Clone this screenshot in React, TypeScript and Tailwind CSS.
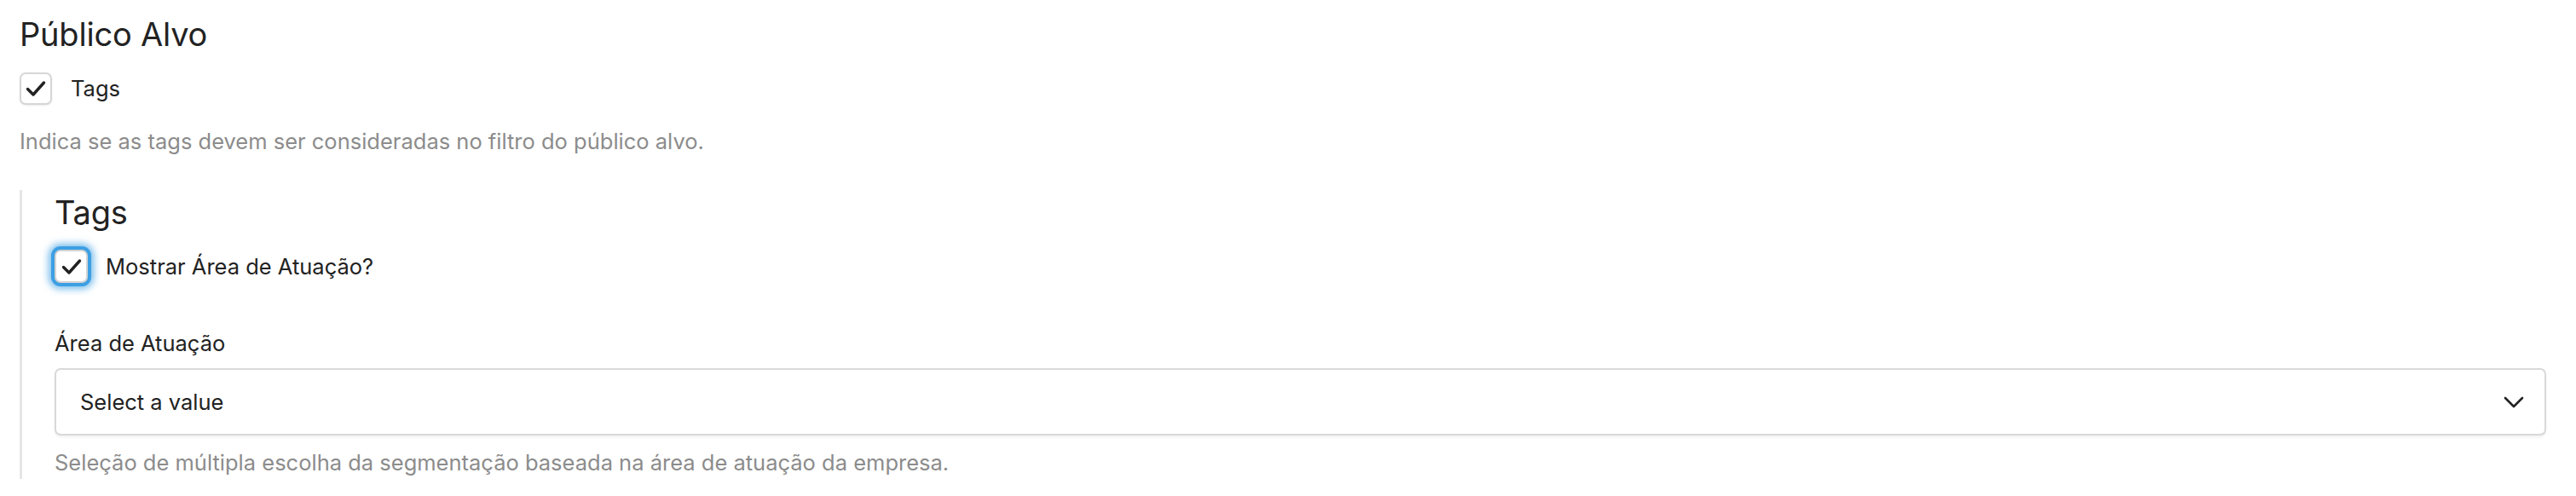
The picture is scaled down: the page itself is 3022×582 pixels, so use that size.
import React from "react";

function Check() {
  return (
    <svg width="24" height="20" viewBox="0 0 24 20" fill="none">
      <polyline points="2.5,10.5 9,17 21.5,3" stroke="#222" strokeWidth="3.4" strokeLinecap="round" strokeLinejoin="round" />
    </svg>
  );
}

function CheckBox({ focused }: { focused?: boolean }) {
  return (
    <div
      className={
        focused
          ? "w-[39px] h-[39px] rounded-[7px] border-2 border-[#d4d4d4] bg-white flex items-center justify-center shrink-0 shadow-[0_0_0_4px_#3d9fe3,0_0_9px_7px_rgba(61,159,227,0.7)]"
          : "w-[38px] h-[38px] rounded-[7px] border-2 border-[#d6d6d6] bg-white flex items-center justify-center shrink-0 shadow-[0_1px_2px_rgba(0,0,0,0.08)]"
      }
    >
      <Check />
    </div>
  );
}

export default function App() {
  return (
    <div
      className="min-h-[582px] bg-white pl-[23px] pr-[35px] pt-[16px] text-[#222]"
      style={{ fontFamily: "Inter, 'Noto Sans', sans-serif" }}
    >
      <h1 className="text-[38px] leading-[48px] font-normal tracking-[-0.2px]">Público Alvo</h1>
      <div className="mt-[21px] flex items-center gap-[22px]">
        <CheckBox />
        <span className="text-[25.5px] leading-[32px]">Tags</span>
      </div>
      <p className="mt-[27px] text-[25.5px] leading-[32px] text-[#8c8c8c]">
        Indica se as tags devem ser consideradas no filtro do público alvo.
      </p>
      <div className="mt-[41px] border-l-[3px] border-[#e6e6e6] pl-[38px] pt-[2px] pb-[3px]">
        <h2 className="text-[38px] leading-[48px] font-normal tracking-[-0.2px]">Tags</h2>
        <div className="mt-[20px] flex items-center gap-[21px]">
          <CheckBox focused />
          <span className="text-[25.5px] leading-[32px]">Mostrar Área de Atuação?</span>
        </div>
        <div className="mt-[55px] text-[25.5px] leading-[32px]">Área de Atuação</div>
        <div className="mt-[13px] h-[79px] rounded-[7px] border-2 border-[#d9d9d9] bg-white shadow-[0_2px_3px_rgba(0,0,0,0.06)] flex items-center justify-between pl-[28px] pr-[24px]">
          <span className="text-[25.5px] leading-[32px]">Select a value</span>
          <svg width="24" height="14" viewBox="0 0 24 14" fill="none">
            <polyline points="2,2 12,12 22,2" stroke="#222" strokeWidth="2.6" strokeLinecap="round" strokeLinejoin="round" />
          </svg>
        </div>
        <p className="mt-[16px] text-[25.5px] leading-[32px] text-[#8c8c8c]">
          Seleção de múltipla escolha da segmentação baseada na área de atuação da empresa.
        </p>
      </div>
    </div>
  );
}
